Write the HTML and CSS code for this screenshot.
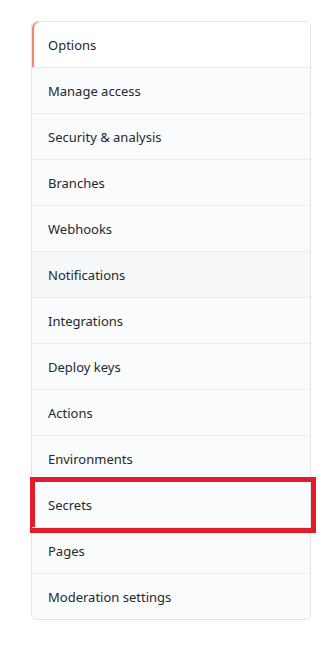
FILE: index.html
```html
<!DOCTYPE html>
<html lang="en">
<head>
    <meta charset="UTF-8">
    <meta name="viewport" content="width=device-width, initial-scale=1.0">
    <title>Settings</title>
    <link rel="stylesheet" href="styles.css">
</head>
<body>
  <nav class="menu">
    <a class="menu-item selected" href="#">Options</a>
    <a class="menu-item" href="#">Manage access</a>
    <a class="menu-item" href="#">Security &amp; analysis</a>
    <a class="menu-item" href="#">Branches</a>
    <a class="menu-item" href="#">Webhooks</a>
    <a class="menu-item hover" href="#">Notifications</a>
    <a class="menu-item" href="#">Integrations</a>
    <a class="menu-item" href="#">Deploy keys</a>
    <a class="menu-item" href="#">Actions</a>
    <a class="menu-item" href="#">Environments</a>
    <a class="menu-item marked" href="#">Secrets<span class="mark"></span></a>
    <a class="menu-item" href="#">Pages</a>
    <a class="menu-item" href="#">Moderation settings</a>
  </nav>
</body>
</html>
```
FILE: styles.css
```css
body{
    margin: 0;
    padding: 21px 18px 0 31px;
    background-color: #fff;
    font-family: "Noto Sans", "Open Sans", sans-serif;
    font-size: 13px;
    color: #24292e;
}

.menu{
    width: 278px;
    border: 1px solid #e1e4e8;
    border-radius: 6px;
    background-color: #fafbfc;
    display: flex;
    flex-direction: column;
}

.menu-item{
    position: relative;
    display: flex;
    align-items: center;
    height: 45px;
    padding: 0 16px;
    border-top: 1px solid #eaecef;
    color: #24292e;
    text-decoration: none;
}
.menu-item:first-child{
    border-top: none;
    border-radius: 6px 6px 0 0;
}
.menu-item:last-child{
    border-radius: 0 0 6px 6px;
}

.selected{
    background-color: #fff;
    box-shadow: inset 2px 0 0 #f9826c;
}
.hover{
    background-color: #f6f8fa;
}

/* red annotation box */
.mark{
    position: absolute;
    top: -5px;
    bottom: -6px;
    left: -2px;
    right: -6px;
    border: 5px solid #e11d2a;
}
```
